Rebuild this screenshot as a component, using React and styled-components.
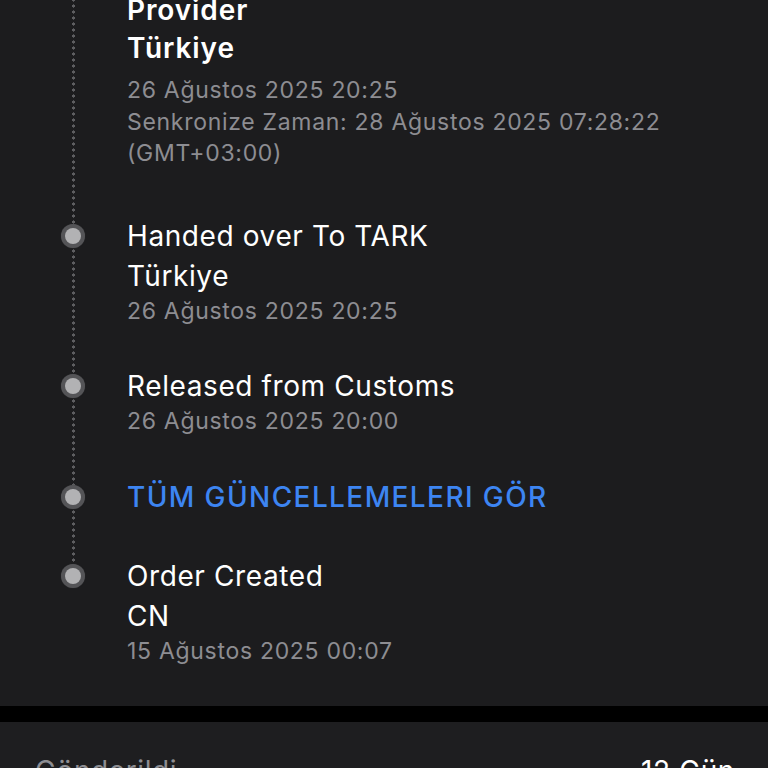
import React from 'react'
import styled, { createGlobalStyle } from 'styled-components'

const GlobalStyle = createGlobalStyle`
  html, body {
    margin: 0;
    padding: 0;
    background: #000;
  }
  body {
    font-family: Inter, "Noto Sans", "Liberation Sans", sans-serif;
    -webkit-font-smoothing: antialiased;
  }
`

const Screen = styled.div`
  width: 768px;
  height: 768px;
  overflow: hidden;
  background: #000;
`

const Card = styled.section`
  background: #1c1c1e;
  padding-bottom: 39px;
`

const Timeline = styled.div`
  display: flex;
  flex-direction: column;
  margin-top: ${(p) => p.$offset}px;
`

const Item = styled.div`
  position: relative;
  display: grid;
  grid-template-columns: 127px 1fr;
  align-items: start;
  padding-bottom: ${(p) => p.$gap}px;

  &::before {
    content: '';
    display: ${(p) => (p.$last ? 'none' : 'block')};
    position: absolute;
    left: 71.5px;
    top: 20px;
    bottom: -20px;
    width: 3px;
    background-image: radial-gradient(circle, #5e5e61 1.4px, transparent 1.8px);
    background-size: 3px 6px;
    background-repeat: repeat-y;
  }
`

const DotCell = styled.div`
  height: 40px;
  display: flex;
  align-items: center;
  padding-left: 61px;
`

const Dot = styled.span`
  position: relative;
  z-index: 1;
  width: 24px;
  height: 24px;
  border-radius: 50%;
  background: #545457;
  box-shadow: 0 0 1px #3a3a3c;
  display: flex;
  align-items: center;
  justify-content: center;

  &::after {
    content: '';
    width: 16px;
    height: 16px;
    border-radius: 50%;
    background: #b2b2b4;
  }
`

const Body = styled.div`
  display: flex;
  flex-direction: column;
`

const Title = styled.div`
  font-size: 28px;
  line-height: ${(p) => (p.$bold ? 38 : 40)}px;
  font-weight: ${(p) => (p.$bold ? 600 : 400)};
  color: #fff;
  letter-spacing: ${(p) => (p.$bold ? 0.9 : 0.6)}px;
  white-space: nowrap;
`

const Link = styled.a`
  font-size: 28px;
  line-height: 40px;
  font-weight: 500;
  color: #3d85f2;
  letter-spacing: 1.4px;
  text-decoration: none;
  white-space: nowrap;
`

const Meta = styled.div`
  margin-top: ${(p) => p.$top || 0}px;
  font-size: 23px;
  line-height: 31.5px;
  color: #8d8d92;
  letter-spacing: 0.7px;
  white-space: nowrap;
`

const Divider = styled.div`
  height: 16px;
  background: #000;
`

const Summary = styled.section`
  background: #1e1e20;
  padding: 29px 33px 40px 35px;
  display: flex;
  justify-content: space-between;
  font-size: 28px;
  line-height: 40px;
  letter-spacing: 0.6px;
`

const Label = styled.span`
  color: #8d8d92;
`

const Value = styled.span`
  color: #fff;
`

const events = [
  {
    title: ['Delivered to Local Service', 'Provider', 'Türkiye'],
    bold: true,
    meta: ['26 Ağustos 2025 20:25', 'Senkronize Zaman: 28 Ağustos 2025 07:28:22', '(GMT+03:00)'],
    metaTop: 8,
    gap: 46
  },
  {
    title: ['Handed over To TARK', 'Türkiye'],
    meta: ['26 Ağustos 2025 20:25'],
    gap: 39
  },
  {
    title: ['Released from Customs'],
    meta: ['26 Ağustos 2025 20:00'],
    gap: 39
  },
  {
    link: 'TÜM GÜNCELLEMELERI GÖR',
    gap: 39
  },
  {
    title: ['Order Created', 'CN'],
    meta: ['15 Ağustos 2025 00:07'],
    gap: 0,
    last: true
  }
]

export default function App() {
  return (
    <Screen>
      <GlobalStyle />
      <Card>
        <Timeline $offset={-47}>
          {events.map((e, i) => (
            <Item key={i} $gap={e.gap} $last={e.last}>
              <DotCell>
                <Dot />
              </DotCell>
              <Body>
                {e.link ? (
                  <Link href="#">{e.link}</Link>
                ) : (
                  <>
                    {e.title.map((t) => (
                      <Title key={t} $bold={e.bold}>
                        {t}
                      </Title>
                    ))}
                    {e.meta.map((m, j) => (
                      <Meta key={m} $top={j === 0 ? e.metaTop : 0}>
                        {m}
                      </Meta>
                    ))}
                  </>
                )}
              </Body>
            </Item>
          ))}
        </Timeline>
      </Card>
      <Divider />
      <Summary>
        <Label>Gönderildi</Label>
        <Value>12 Gün</Value>
      </Summary>
    </Screen>
  )
}
